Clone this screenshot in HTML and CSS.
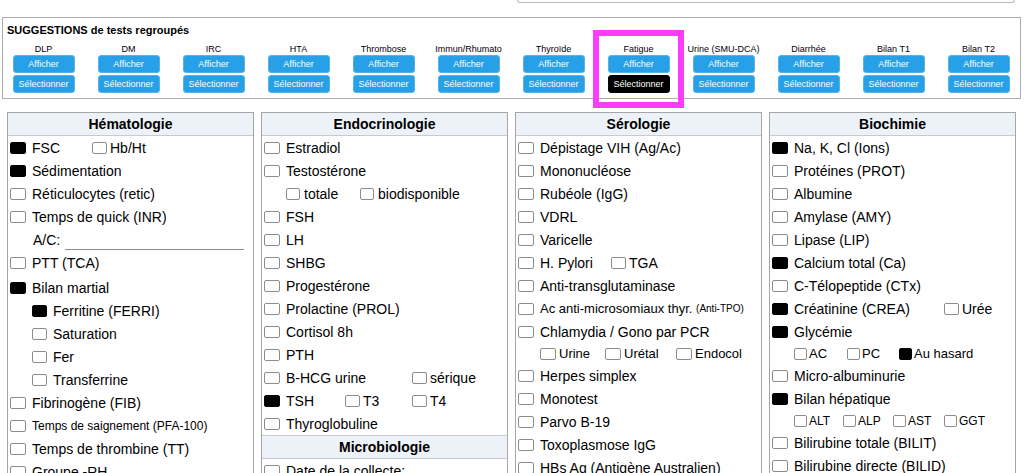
FILE: index.html
```html
<!doctype html>
<html lang="fr">
    <head>
        <meta charset="utf-8">
        <meta name="viewport" content="width=device-width, initial-scale=1.0"/>
        <title>Requête de laboratoire</title>

        <link rel="stylesheet" href="styles.css">
    </head>
    <body>

        <div class="topbar"><div class="search"></div></div>

        <section class="suggestions">
            <h2>SUGGESTIONS de tests regroupés</h2>
            <div class="groups">
                <div class="group"><span>DLP</span><button>Afficher</button><button>Sélectionner</button></div>
                <div class="group"><span>DM</span><button>Afficher</button><button>Sélectionner</button></div>
                <div class="group"><span>IRC</span><button>Afficher</button><button>Sélectionner</button></div>
                <div class="group"><span>HTA</span><button>Afficher</button><button>Sélectionner</button></div>
                <div class="group"><span>Thrombose</span><button>Afficher</button><button>Sélectionner</button></div>
                <div class="group"><span>Immun/Rhumato</span><button>Afficher</button><button>Sélectionner</button></div>
                <div class="group"><span>Thyroïde</span><button>Afficher</button><button>Sélectionner</button></div>
                <div class="group"><span>Fatigue</span><button>Afficher</button><button class="active">Sélectionner</button></div>
                <div class="group"><span>Urine (SMU-DCA)</span><button>Afficher</button><button>Sélectionner</button></div>
                <div class="group"><span>Diarrhée</span><button>Afficher</button><button>Sélectionner</button></div>
                <div class="group"><span>Bilan T1</span><button>Afficher</button><button>Sélectionner</button></div>
                <div class="group"><span>Bilan T2</span><button>Afficher</button><button>Sélectionner</button></div>
            </div>
        </section>

        <!-- marks the chosen group -->
        <div class="highlight"></div>

        <main class="tests">

            <div class="panel">
                <h3>Hématologie</h3>
                <div class="row"><label class="item w82"><input type="checkbox" checked>FSC</label><label class="item"><input type="checkbox">Hb/Ht</label></div>
                <div class="row"><label class="item"><input type="checkbox" checked>Sédimentation</label></div>
                <div class="row"><label class="item"><input type="checkbox">Réticulocytes (retic)</label></div>
                <div class="row"><label class="item"><input type="checkbox">Temps de quick (INR)</label></div>
                <div class="row field"><span>A/C:</span><span class="line"></span></div>
                <div class="row"><label class="item"><input type="checkbox">PTT (TCA)</label></div>
                <div class="row spaced"><label class="item"><input type="checkbox" checked>Bilan martial</label></div>
                <div class="row sub"><label class="item"><input type="checkbox" checked>Ferritine (FERRI)</label></div>
                <div class="row sub"><label class="item"><input type="checkbox">Saturation</label></div>
                <div class="row sub"><label class="item"><input type="checkbox">Fer</label></div>
                <div class="row sub"><label class="item"><input type="checkbox">Transferrine</label></div>
                <div class="row"><label class="item"><input type="checkbox">Fibrinogène (FIB)</label></div>
                <div class="row"><label class="item note"><input type="checkbox">Temps de saignement (PFA-100)</label></div>
                <div class="row"><label class="item"><input type="checkbox">Temps de thrombine (TT)</label></div>
                <div class="row"><label class="item"><input type="checkbox">Groupe -RH</label></div>
                <div class="row"><label class="item"><input type="checkbox">D-dimères</label></div>
            </div>

            <div class="panel">
                <h3>Endocrinologie</h3>
                <div class="row"><label class="item"><input type="checkbox">Estradiol</label></div>
                <div class="row"><label class="item"><input type="checkbox">Testostérone</label></div>
                <div class="row sub choices"><label class="item w74"><input type="checkbox">totale</label><label class="item"><input type="checkbox">biodisponible</label></div>
                <div class="row"><label class="item"><input type="checkbox">FSH</label></div>
                <div class="row"><label class="item"><input type="checkbox">LH</label></div>
                <div class="row"><label class="item"><input type="checkbox">SHBG</label></div>
                <div class="row"><label class="item"><input type="checkbox">Progestérone</label></div>
                <div class="row"><label class="item"><input type="checkbox">Prolactine (PROL)</label></div>
                <div class="row"><label class="item"><input type="checkbox">Cortisol 8h</label></div>
                <div class="row"><label class="item"><input type="checkbox">PTH</label></div>
                <div class="row"><label class="item w148"><input type="checkbox">B-HCG urine</label><label class="item"><input type="checkbox">sérique</label></div>
                <div class="row"><label class="item w81"><input type="checkbox" checked>TSH</label><label class="item w67"><input type="checkbox">T3</label><label class="item"><input type="checkbox">T4</label></div>
                <div class="row"><label class="item"><input type="checkbox">Thyroglobuline</label></div>
                <h3 class="split">Microbiologie</h3>
                <div class="row"><label class="item"><input type="checkbox">Date de la collecte:</label></div>
                <div class="row"><label class="item"><input type="checkbox">Culture d'urine</label></div>
            </div>

            <div class="panel">
                <h3>Sérologie</h3>
                <div class="row"><label class="item"><input type="checkbox">Dépistage VIH (Ag/Ac)</label></div>
                <div class="row"><label class="item"><input type="checkbox">Mononucléose</label></div>
                <div class="row"><label class="item"><input type="checkbox">Rubéole (IgG)</label></div>
                <div class="row"><label class="item"><input type="checkbox">VDRL</label></div>
                <div class="row"><label class="item"><input type="checkbox">Varicelle</label></div>
                <div class="row"><label class="item w93"><input type="checkbox">H. Pylori</label><label class="item"><input type="checkbox">TGA</label></div>
                <div class="row"><label class="item"><input type="checkbox">Anti-transglutaminase</label></div>
                <div class="row"><label class="item long"><input type="checkbox">Ac anti-microsomiaux thyr.&nbsp;<small>(Anti-TPO)</small></label></div>
                <div class="row"><label class="item"><input type="checkbox">Chlamydia / Gono par PCR</label></div>
                <div class="row sub compact"><label class="item w65"><input type="checkbox">Urine</label><label class="item w71"><input type="checkbox">Urétal</label><label class="item"><input type="checkbox">Endocol</label></div>
                <div class="row"><label class="item"><input type="checkbox">Herpes simplex</label></div>
                <div class="row"><label class="item"><input type="checkbox">Monotest</label></div>
                <div class="row"><label class="item"><input type="checkbox">Parvo B-19</label></div>
                <div class="row"><label class="item"><input type="checkbox">Toxoplasmose IgG</label></div>
                <div class="row"><label class="item"><input type="checkbox">HBs Ag (Antigène Australien)</label></div>
                <div class="row"><label class="item"><input type="checkbox">Anti-HBs</label></div>
            </div>

            <div class="panel">
                <h3>Biochimie</h3>
                <div class="row"><label class="item"><input type="checkbox" checked>Na, K, Cl (Ions)</label></div>
                <div class="row"><label class="item"><input type="checkbox">Protéines (PROT)</label></div>
                <div class="row"><label class="item"><input type="checkbox">Albumine</label></div>
                <div class="row"><label class="item"><input type="checkbox">Amylase (AMY)</label></div>
                <div class="row"><label class="item"><input type="checkbox">Lipase (LIP)</label></div>
                <div class="row"><label class="item"><input type="checkbox" checked>Calcium total (Ca)</label></div>
                <div class="row"><label class="item"><input type="checkbox">C-Télopeptide (CTx)</label></div>
                <div class="row"><label class="item w172"><input type="checkbox" checked>Créatinine (CREA)</label><label class="item"><input type="checkbox">Urée</label></div>
                <div class="row"><label class="item"><input type="checkbox" checked>Glycémie</label></div>
                <div class="row sub mini"><label class="item w53"><input type="checkbox">AC</label><label class="item w52"><input type="checkbox">PC</label><label class="item"><input type="checkbox" checked>Au hasard</label></div>
                <div class="row"><label class="item"><input type="checkbox">Micro-albuminurie</label></div>
                <div class="row"><label class="item"><input type="checkbox" checked>Bilan hépatique</label></div>
                <div class="row sub mini xs"><label class="item w49"><input type="checkbox">ALT</label><label class="item w50"><input type="checkbox">ALP</label><label class="item w51"><input type="checkbox">AST</label><label class="item"><input type="checkbox">GGT</label></div>
                <div class="row"><label class="item"><input type="checkbox">Bilirubine totale (BILIT)</label></div>
                <div class="row"><label class="item"><input type="checkbox">Bilirubine directe (BILID)</label></div>
                <div class="row"><label class="item"><input type="checkbox">Cholestérol</label></div>
            </div>

        </main>

    </body>
</html>
```

FILE: styles.css
```css
/*----- Reset -----*/

*{
	box-sizing: border-box;
}

html, body{
	padding: 0;
	margin: 0;
	font-family: "Liberation Sans", Arial, sans-serif;
	font-size: 14px;
	color: #000;
	background: #fff;
}

body{
	position: relative;
}

/*----- top -----*/

.topbar{
	display: flex;
	justify-content: flex-end;
	height: 17px;
	padding-right: 9px;
}

.search{
	width: 498px;
	height: 3px;
	border: 1px solid #b8b8b8;
	border-top: none;
	border-radius: 0 0 5px 5px;
}

/*----- suggestions -----*/

.suggestions{
	height: 82px;
	margin: 0 3px 0 2px;
	padding-top: 6px;
	border: 1px solid #acacac;
}

.suggestions h2{
	margin: 0;
	padding-left: 4px;
	font-size: 11px;
	line-height: 12px;
}

.groups{
	display: grid;
	grid-template-columns: repeat(12, 85px);
	margin: 8px -1px 0 -2px;
}

.group{
	display: flex;
	flex-direction: column;
	align-items: center;
}

.group span{
	font-size: 9px;
	line-height: 11px;
	white-space: nowrap;
}

.group button{
	width: 62px;
	height: 18px;
	padding: 0;
	font-family: inherit;
	font-size: 9px;
	color: #fff;
	background: #27a0e8;
	border: 1px solid #55b3ec;
	border-radius: 3px;
}

.group button + button{
	margin-top: 2px;
}

.group button.active{
	background: #000;
	border-color: #000;
}

.highlight{
	position: absolute;
	left: 593px;
	top: 30px;
	width: 91px;
	height: 78px;
	border: 6px solid #fb3cfb;
}

/*----- test panels -----*/

.tests{
	display: grid;
	grid-template-columns: repeat(4, 1fr);
	gap: 7px;
	padding: 13px 8px 0 7px;
}

.panel{
	border: 1px solid #a6a6a6;
	white-space: nowrap;
}

.panel h3{
	margin: 0;
	height: 23px;
	font-size: 14px;
	line-height: 22px;
	text-align: center;
	background: #edf2f9;
	border-bottom: 1px solid #c6cbd3;
}

.panel h3.split{
	height: 24px;
	border-top: 1px solid #c6cbd3;
}

.row{
	display: flex;
	align-items: center;
	height: 23px;
	padding-left: 2px;
}

.row.spaced{
	margin-top: 2px;
}

.item{
	display: flex;
	align-items: center;
}

.item input{
	appearance: none;
	-webkit-appearance: none;
	width: 16px;
	height: 12px;
	margin: 0 6px 0 0;
	background: #fff;
	border: 1px solid #8c8c8c;
	border-radius: 2px;
}

.item input:checked{
	background: #000;
	border-color: #000;
}

.item + .item input{
	width: 15px;
	margin-right: 3px;
}

.item.long{
	font-size: 13px;
}

.item small{
	font-size: 10px;
}

.item.note{
	font-size: 12px;
}

.w49{ width: 49px; }
.w50{ width: 50px; }
.w51{ width: 51px; }
.w52{ width: 52px; }
.w53{ width: 53px; }
.w65{ width: 65px; }
.w67{ width: 67px; }
.w71{ width: 71px; }
.w74{ width: 74px; }
.w81{ width: 81px; }
.w82{ width: 82px; }
.w93{ width: 93px; }
.w148{ width: 148px; }
.w172{ width: 172px; }

/* indented choices under a test */
.sub{
	padding-left: 24px;
}

.sub .item input{
	width: 15px;
	margin-right: 6px;
}

.sub.choices .item input{
	width: 14px;
	margin-right: 4px;
}

.sub.compact{
	height: 21px;
	font-size: 13px;
}

.sub.compact .item input{
	width: 16px;
	margin-right: 3px;
}

.sub.mini{
	height: 21px;
	font-size: 13px;
}

.sub.mini .item input{
	width: 13px;
	margin-right: 2px;
}

.sub.mini.xs{
	font-size: 12px;
}

.field{
	padding: 0 9px 0 25px;
}

.field .line{
	flex: 1;
	align-self: flex-end;
	margin: 0 0 1px 5px;
	border-bottom: 1px solid #8c8c8c;
}
```
